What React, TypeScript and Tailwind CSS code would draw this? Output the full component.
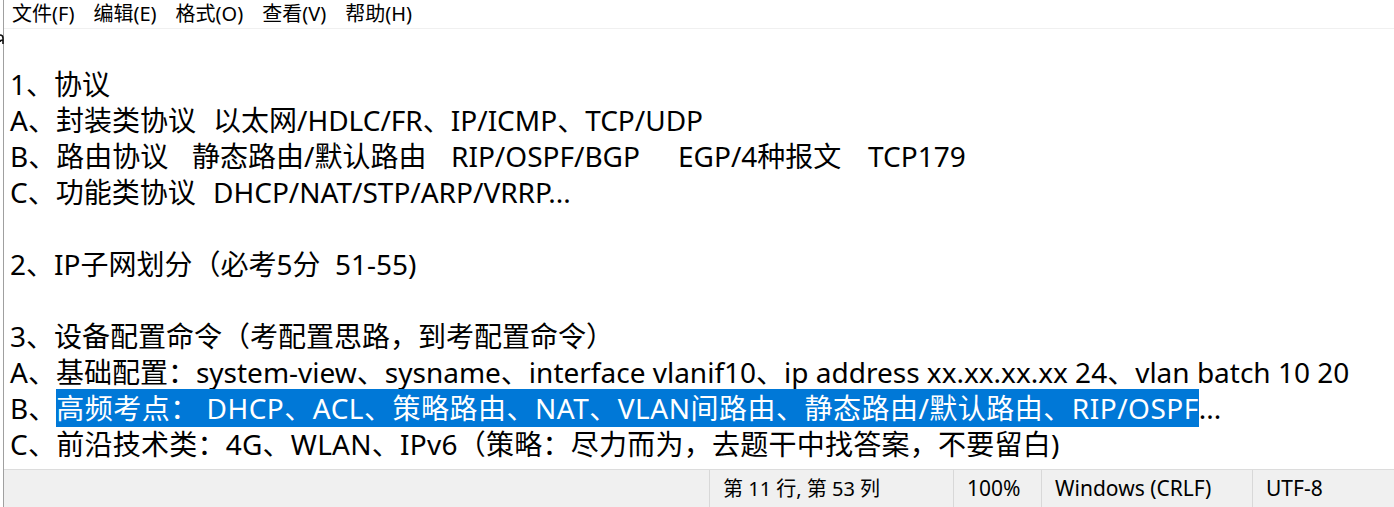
import React from "react";

const font = { fontFamily: '"Noto Sans", "Noto Sans CJK SC", sans-serif' };

const menus = ["文件(F)", "编辑(E)", "格式(O)", "查看(V)", "帮助(H)"];

// tab-stop segments: each entry but the last sits in a fixed-width cell, like Notepad tabs
type Line = { cells?: { text: string; w?: string }[]; pre?: string; sel?: string; post?: string; track?: string };

const lines: Line[] = [
  { cells: [{ text: "" }] },
  { cells: [{ text: "1、协议" }] },
  { cells: [{ text: "A、封装类协议", w: "w-[203px]" }, { text: "以太网/HDLC/FR、IP/ICMP、TCP/UDP" }] },
  {
    cells: [
      { text: "B、路由协议", w: "w-[182px]" },
      { text: "静态路由/默认路由", w: "w-[259px]" },
      { text: "RIP/OSPF/BGP", w: "w-[227px]" },
      { text: "EGP/4种报文", w: "w-[190px]" },
      { text: "TCP179" },
    ],
  },
  { cells: [{ text: "C、功能类协议", w: "w-[203px]" }, { text: "DHCP/NAT/STP/ARP/VRRP..." }] },
  { cells: [{ text: "" }] },
  { cells: [{ text: "2、IP子网划分（必考5分  51-55)" }] },
  { cells: [{ text: "" }] },
  { cells: [{ text: "3、设备配置命令（考配置思路，到考配置命令）" }] },
  { cells: [{ text: "A、基础配置：system-view、sysname、interface vlanif10、ip address xx.xx.xx.xx 24、vlan batch 10 20" }] },
  { pre: "B、", sel: "高频考点： DHCP、ACL、策略路由、NAT、VLAN间路由、静态路由/默认路由、RIP/OSPF", post: "..." },
  { cells: [{ text: "C、前沿技术类：4G、WLAN、IPv6（策略：尽力而为，去题干中找答案，不要留白)" }], track: "tracking-[0.25px]" },
];

const status = [
  { label: "第 11 行, 第 53 列", w: "w-[244px] text-[20px]" },
  { label: "100%", w: "w-[88px]" },
  { label: "Windows (CRLF)", w: "w-[211px]" },
  { label: "UTF-8", w: "flex-1" },
];

export default function App() {
  return (
    <div className="relative h-[507px] w-[1394px] overflow-hidden bg-white text-black" style={font}>
      {/* sliver of a glyph scrolled off the left edge */}
      <svg className="absolute left-0 top-[32px]" width="4" height="14" viewBox="0 0 4 14">
        <path d="M0 3 C2.5 3 3 4.5 3 6 L3 12 M3 8 C1 8 0 9 0 10" stroke="#111" strokeWidth="1.6" fill="none" />
      </svg>
      <div className="ml-[3px] flex h-full flex-col border-l border-[#a0a0a0]">
        <div className="flex h-[29px] items-center gap-[19px] border-b border-[#f0f0f0] pl-[8px] text-[20px] leading-none">
          {menus.map((m) => (
            <span key={m}>{m}</span>
          ))}
        </div>
        <div className="flex-1 pl-[6px] pt-[1px]">
          {lines.map((l, i) => (
            <div key={i} className={`h-[36px] whitespace-pre text-[28px] leading-[36px] ${l.track ?? ""}`}>
              {l.sel ? (
                <>
                  {l.pre}
                  <span className="bg-[#0078d7] tracking-[0.5px] text-white">{l.sel}</span>
                  {l.post}
                </>
              ) : (
                l.cells!.map((c, j) => (
                  <span key={j} className={c.w ? `inline-block ${c.w}` : undefined}>
                    {c.text}
                  </span>
                ))
              )}
            </div>
          ))}
        </div>
        <div className="flex h-[38px] border-t border-[#dcdcdc] bg-[#f0f0f0] text-[21px]">
          <div className="w-[705px]" />
          {status.map((s) => (
            <div key={s.label} className={`${s.w} flex items-center border-l border-[#d8d8d8] pl-[13px]`}>
              {s.label}
            </div>
          ))}
        </div>
      </div>
    </div>
  );
}
